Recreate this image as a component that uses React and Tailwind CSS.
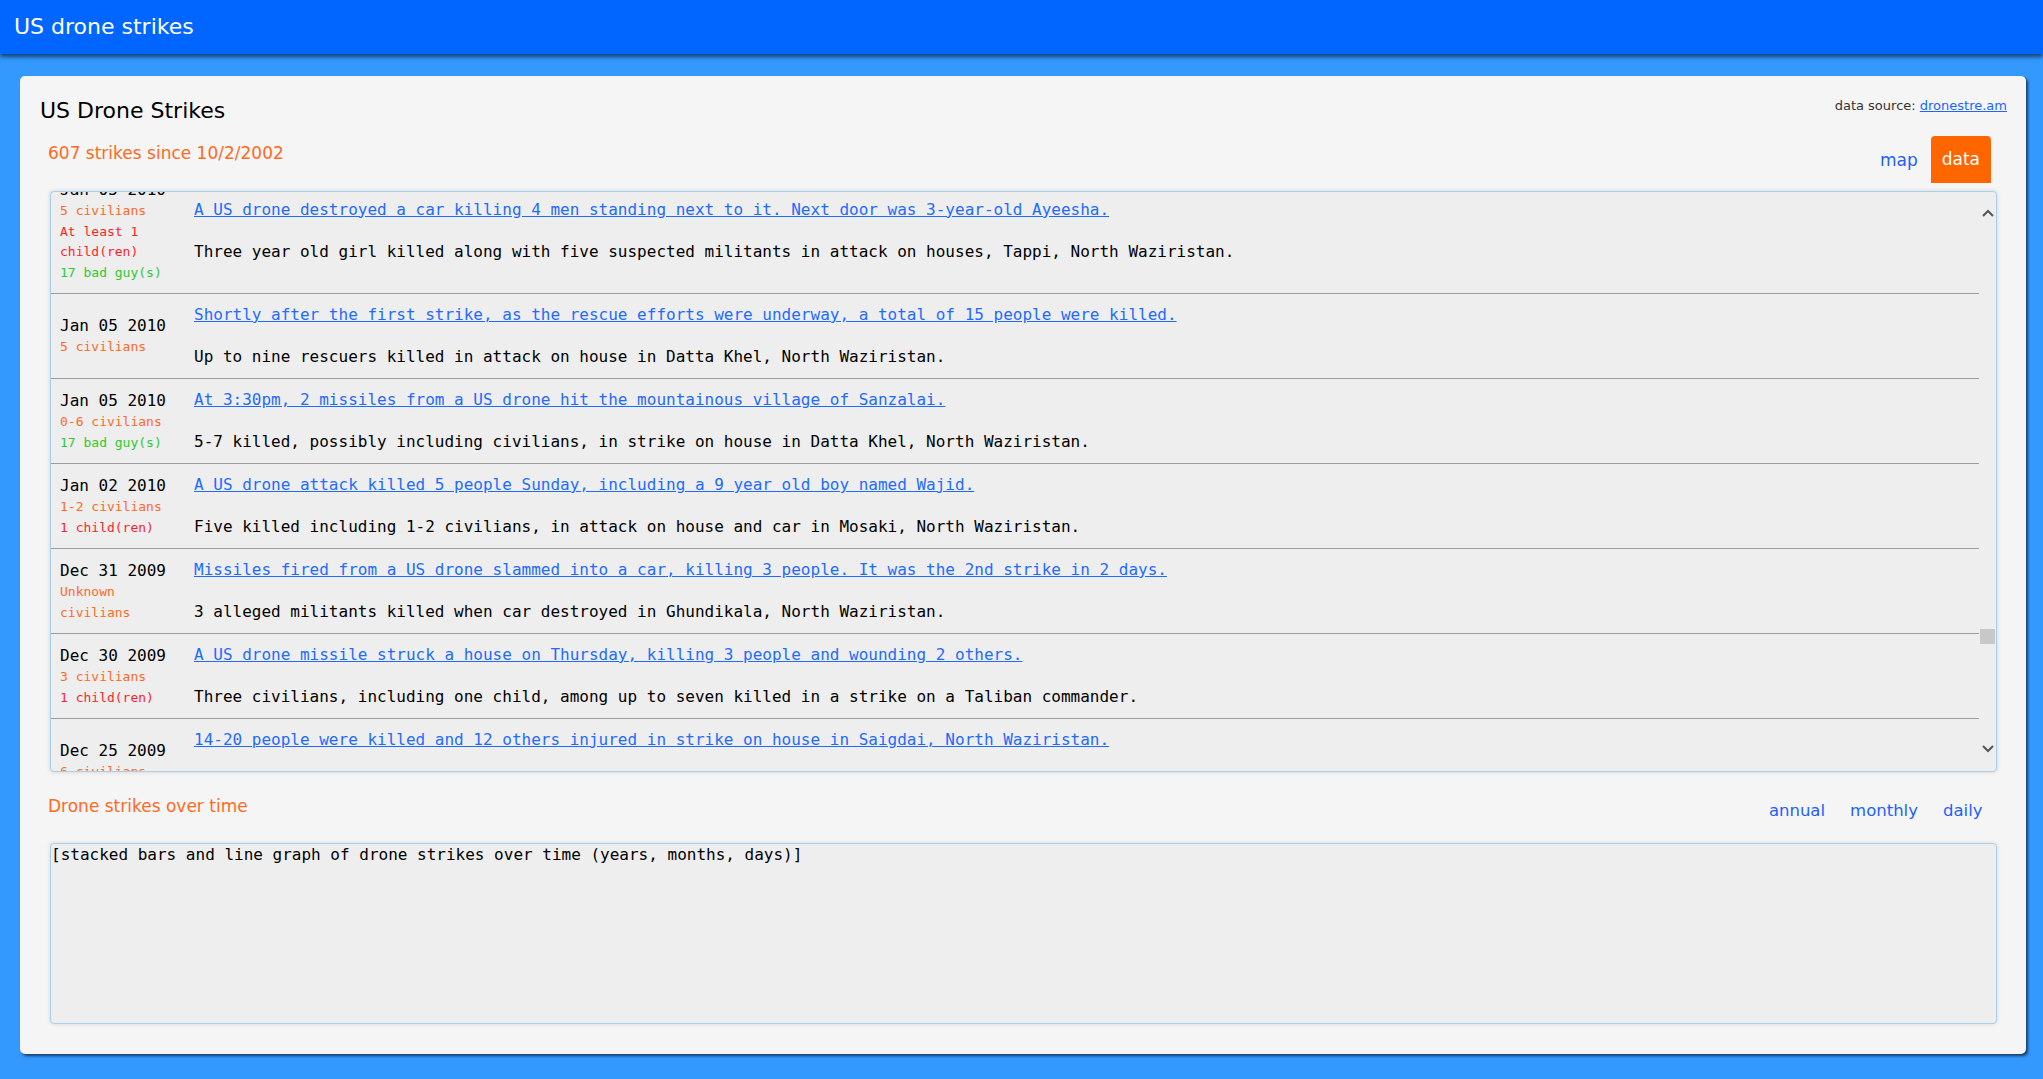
import React, { useEffect, useRef } from 'react';

const strikes = [
  {
    date: 'Jan 05 2010',
    meta: [
      { text: '5 civilians', kind: 'civ' },
      { text: 'At least 1 child(ren)', kind: 'kid' },
      { text: '17 bad guy(s)', kind: 'bad' },
    ],
    link: 'A US drone destroyed a car killing 4 men standing next to it. Next door was 3-year-old Ayeesha.',
    desc: 'Three year old girl killed along with five suspected militants in attack on houses, Tappi, North Waziristan.',
  },
  {
    date: 'Jan 05 2010',
    meta: [{ text: '5 civilians', kind: 'civ' }],
    link: 'Shortly after the first strike, as the rescue efforts were underway, a total of 15 people were killed.',
    desc: 'Up to nine rescuers killed in attack on house in Datta Khel, North Waziristan.',
  },
  {
    date: 'Jan 05 2010',
    meta: [
      { text: '0-6 civilians', kind: 'civ' },
      { text: '17 bad guy(s)', kind: 'bad' },
    ],
    link: 'At 3:30pm, 2 missiles from a US drone hit the mountainous village of Sanzalai.',
    desc: '5-7 killed, possibly including civilians, in strike on house in Datta Khel, North Waziristan.',
  },
  {
    date: 'Jan 02 2010',
    meta: [
      { text: '1-2 civilians', kind: 'civ' },
      { text: '1 child(ren)', kind: 'kid' },
    ],
    link: 'A US drone attack killed 5 people Sunday, including a 9 year old boy named Wajid.',
    desc: 'Five killed including 1-2 civilians, in attack on house and car in Mosaki, North Waziristan.',
  },
  {
    date: 'Dec 31 2009',
    meta: [{ text: 'Unknown civilians', kind: 'civ' }],
    link: 'Missiles fired from a US drone slammed into a car, killing 3 people. It was the 2nd strike in 2 days.',
    desc: '3 alleged militants killed when car destroyed in Ghundikala, North Waziristan.',
  },
  {
    date: 'Dec 30 2009',
    meta: [
      { text: '3 civilians', kind: 'civ' },
      { text: '1 child(ren)', kind: 'kid' },
    ],
    link: 'A US drone missile struck a house on Thursday, killing 3 people and wounding 2 others.',
    desc: 'Three civilians, including one child, among up to seven killed in a strike on a Taliban commander.',
  },
  {
    date: 'Dec 25 2009',
    meta: [{ text: '6 civilians', kind: 'civ' }],
    link: '14-20 people were killed and 12 others injured in strike on house in Saigdai, North Waziristan.',
    desc: 'Up to 20 killed in strike on house in Saigdai, North Waziristan.',
  },
];

const metaColor = {
  civ: 'text-[#ff6a1f]',
  kid: 'text-[#ff1f2a]',
  bad: 'text-[#2ccc2c]',
};

const Chevron = ({ up }) => (
  <svg width="12" height="8" viewBox="0 0 12 8" fill="none" stroke="#555555" strokeWidth="2">
    {up ? <polyline points="1,7 6,2 11,7" /> : <polyline points="1,1 6,6 11,1" />}
  </svg>
);

const StrikeRow = ({ strike }) => (
  <div className="flex items-center py-[10px] border-b border-[#9e9e9e]">
    <div className="w-[143px] shrink-0 pl-[9px] pr-[14px]">
      <div className="text-[16px] leading-[23px] text-black">{strike.date}</div>
      {strike.meta.map((m, i) => (
        <div key={i} className={`text-[13px] leading-[20.5px] ${metaColor[m.kind]}`}>
          {m.text}
        </div>
      ))}
    </div>
    <div className="flex-1 min-w-0">
      <a href="#" className="block text-[16px] leading-[22px] text-[#1f6bff] underline">
        {strike.link}
      </a>
      <p className="mt-[20px] text-[16px] leading-[22px] text-black">{strike.desc}</p>
    </div>
  </div>
);

export default function App() {
  const listRef = useRef(null);

  useEffect(() => {
    if (listRef.current) listRef.current.scrollTop = 24;
  }, []);

  return (
    <div className="min-h-screen bg-[#3399ff] pb-[25px] font-['DejaVu_Sans',sans-serif]">
      {/* Top bar */}
      <header className="h-[54px] bg-[#0066ff] shadow-[0_3px_4px_rgba(0,0,0,0.55)] flex items-center px-[14px]">
        <h1 className="text-white text-[22px] leading-none">US drone strikes</h1>
      </header>

      <main className="mt-[22px] ml-[20px] mr-[17px]">
        <div className="bg-[#f5f5f5] rounded-[5px] shadow-[2px_2px_3px_rgba(0,0,0,0.6)] pl-[20px] pr-[19px] pt-[22px] pb-[30px]">
          {/* Title row */}
          <div className="flex items-start justify-between">
            <h2 className="text-[22px] leading-[26px] text-black">US Drone Strikes</h2>
            <div className="text-[13px] leading-[16px] text-[#333333]">
              data source:{' '}
              <a href="#" className="text-[#1a66ff] underline">dronestre.am</a>
            </div>
          </div>

          {/* Count + view tabs */}
          <div className="mt-[12px] flex items-start justify-between pl-[8px] pr-[16px]">
            <div className="mt-[7px] text-[17px] leading-[20px] text-[#ff6a1f]">607 strikes since 10/2/2002</div>
            <div className="flex items-center h-[47px]">
              <a href="#" className="px-[13px] text-[17px] leading-[20px] text-[#1f5fff]">map</a>
              <span className="h-[47px] flex items-center px-[11px] rounded-t-[4px] bg-[#ff6600] text-white text-[17px]">
                data
              </span>
            </div>
          </div>

          {/* Strike list */}
          <div className="mt-[8px] mx-[10px] h-[581px] flex border border-[#a9cfee] rounded-[4px] bg-[#eeeeee] shadow-[0_0_4px_rgba(0,0,0,0.15)] overflow-hidden font-['DejaVu_Sans_Mono',monospace]">
            <div ref={listRef} className="flex-1 min-w-0 overflow-y-scroll [scrollbar-width:none]">
              {strikes.map((s, i) => (
                <StrikeRow key={i} strike={s} />
              ))}
            </div>
            <div className="w-[17px] shrink-0 flex flex-col items-center">
              <div className="pt-[17px]">
                <Chevron up />
              </div>
              <div className="mt-[412px] w-[15px] h-[15px] bg-[#c8c8c8]" />
              <div className="flex-1" />
              <div className="pb-[18px]">
                <Chevron />
              </div>
            </div>
          </div>

          {/* Over time */}
          <div className="mt-[24px] flex items-start justify-between pl-[8px] pr-[12px]">
            <div className="text-[17px] leading-[20px] text-[#ff6a1f]">Drone strikes over time</div>
            <div className="mt-[5px] flex">
              {['annual', 'monthly', 'daily'].map((t) => (
                <a key={t} href="#" className="px-[12.5px] text-[16.5px] leading-[20px] text-[#1f5fff]">
                  {t}
                </a>
              ))}
            </div>
          </div>

          <div className="mt-[22px] mx-[10px] h-[181px] border border-[#a9cfee] rounded-[4px] bg-[#eeeeee] shadow-[0_0_4px_rgba(0,0,0,0.12)] font-['DejaVu_Sans_Mono',monospace] text-[16px] leading-[22px] text-black">
            [stacked bars and line graph of drone strikes over time (years, months, days)]
          </div>
        </div>
      </main>
    </div>
  );
}
